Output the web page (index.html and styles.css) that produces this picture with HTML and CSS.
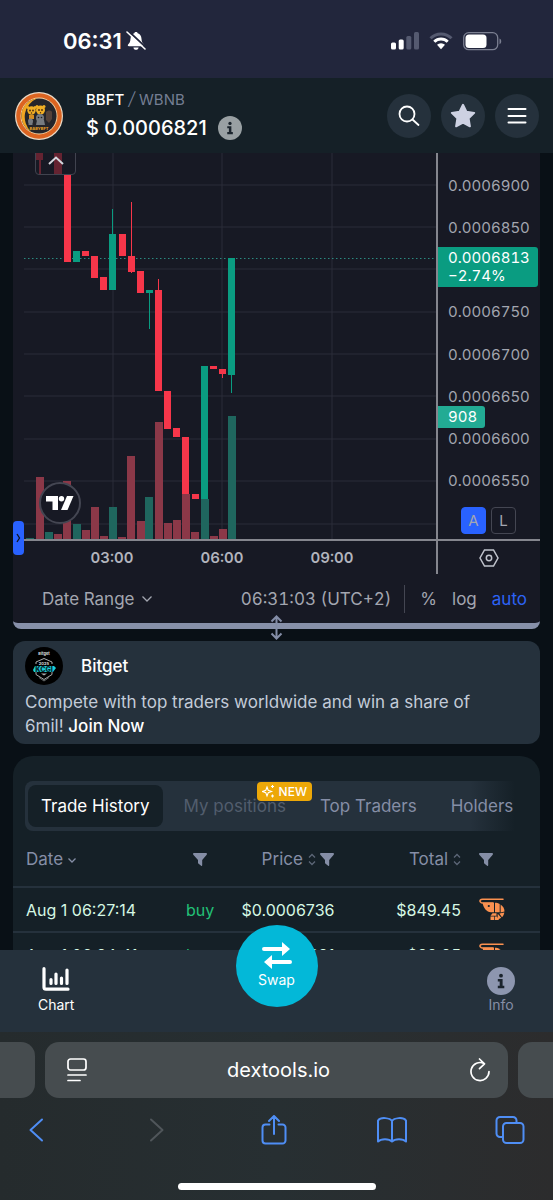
FILE: index.html
```html
<!DOCTYPE html>
<html lang="en">
<head>
  <meta charset="UTF-8">
  <meta name="viewport" content="width=device-width, initial-scale=1">
  <title>BBFT / WBNB</title>
  <link rel="stylesheet" href="styles.css">
</head>
<body>

<!-- shared shapes -->
<svg class="defs" aria-hidden="true">
  <symbol id="filter" viewBox="0 0 14 13"><path d="M1 0h12c1 0 1.300 1 .7 1.700L9.200 7v5.300c0 .6-.6.9-1.100.5L5.300 10.500 5 10V7L.3 1.700C-.3 1 0 0 1 0z"/></symbol>
  <symbol id="sort" viewBox="0 0 8 13"><path d="M1 4.500l3-3 3 3M1 8.500l3 3 3-3" fill="none" stroke="currentColor" stroke-width="1.300"/></symbol>
  <symbol id="info" viewBox="0 0 28 28">
    <circle cx="14" cy="14" r="14"/>
    <g fill="#1b242d"><circle cx="14" cy="8.700" r="1.900"/><path d="M10.800 12h4.800v6.800h1.700v2.400h-6.500v-2.400h1.900v-4.400h-1.900z"/></g>
  </symbol>
  <symbol id="shrimp" viewBox="0 0 26 24">
    <path d="M24 1.200H3.500C1.500 1.200.5 2.600 1.300 3.800 1.900 4.800 3 5 4.500 5H14" fill="none" stroke="#fb9150" stroke-width="1.500" stroke-linecap="round"/>
    <g fill="#fb9150">
      <path d="M3.500 4.700H15v9.500h-3C7.500 14 4.500 10 3.500 4.700z"/>
      <path d="M16 4.700c1.700 0 3.300.4 4.700 1.300v8.200H16z"/>
      <path d="M21.600 6.600c2.500 1.700 3.900 4.100 3.900 6.900l-3.900 1z"/>
      <path d="M20.300 15.600l5-1.100c-.2 1.800-1 3.400-2.300 4.700z"/>
      <path d="M18.700 15.800l3.500 4c-1 .8-2.200 1.200-3.500 1.400z"/>
      <path d="M13.500 15.200h4v2.500h-6zM11.500 18.500h3.800v3.500h-3.800zM16 18.500h2l2 3.500h-4z"/>
    </g>
    <circle cx="9.800" cy="8" r="1.100" fill="#152027"/>
  </symbol>
</svg>

<div class="status-bar">
  <div class="clock">
    <span>06:31</span>
    <svg width="20" height="20" viewBox="0 0 20 20">
      <path d="M10 1c.9 0 1.500.5 1.700 1.300 2.400.8 3.600 2.800 3.800 5.400.2 3 .9 4.200 2.200 5.500.9 1 .5 2-.7 2H3c-1.200 0-1.600-1-.7-2 1.300-1.300 2-2.500 2.200-5.500.2-2.600 1.400-4.600 3.800-5.400C8.500 1.500 9.100 1 10 1zM7.400 16.500h5.200c-.2 1.400-1.200 2.300-2.600 2.300s-2.400-.9-2.600-2.300z" fill="#fff"/>
      <path d="M2.500 0L20 16.500" stroke="#22263c" stroke-width="1.800"/>
      <path d="M1 1l18 17" stroke="#fff" stroke-width="1.600" stroke-linecap="round"/>
    </svg>
  </div>
  <div class="signals">
    <svg width="28" height="18" viewBox="0 0 28 18">
      <g fill="#fff"><rect y="10.500" width="5" height="7" rx="1.500"/><rect x="7.700" y="7.500" width="5" height="10" rx="1.500"/></g>
      <g fill="#555a70"><rect x="15.300" y="4" width="5" height="13.500" rx="1.500"/><rect x="23" width="5" height="17.500" rx="1.500"/></g>
    </svg>
    <svg width="24" height="18" viewBox="0 0 24 18" fill="none">
      <path d="M1.500 6.300a15 15 0 0 1 21 0" stroke="#555a70" stroke-width="3"/>
      <path d="M5.300 9.800a9.600 9.600 0 0 1 13.400 0" stroke="#fff" stroke-width="3"/>
      <path d="M8 12.800a5.800 5.800 0 0 1 8 0l-4 4.500z" fill="#fff"/>
    </svg>
    <svg width="39" height="19" viewBox="0 0 39 19">
      <rect x=".7" y=".7" width="34" height="17" rx="5" fill="none" stroke="#7b7f91" stroke-width="1.300"/>
      <rect x="2.500" y="2.500" width="21" height="13.500" rx="3.500" fill="#fff"/>
      <path d="M36.500 6.500c2.300.7 2.300 5 0 5.700z" fill="#7b7f91"/>
    </svg>
  </div>
</div>

<header class="token-bar">
  <svg class="token-logo" width="48" height="48" viewBox="0 0 48 48">
    <circle cx="24" cy="24" r="24" fill="#e9d9c6"/>
    <circle cx="24" cy="24" r="22.800" fill="#dc6421"/>
    <circle cx="24" cy="24" r="18.500" fill="#f2d3a4"/>
    <circle cx="24" cy="24" r="17.600" fill="#25252a"/>
    <path d="M22 6.500A17.500 17.500 0 0 0 16 39.500 20 20 0 0 1 22 6.500z" fill="#f0a522"/>
    <g fill="#f0ae24">
      <circle cx="16.500" cy="18.500" r="4.200"/><circle cx="25.500" cy="18" r="4.500"/>
      <circle cx="13" cy="15.500" r="1.500"/><circle cx="20" cy="15.500" r="1.500"/>
      <circle cx="22" cy="14.500" r="1.500"/><circle cx="29" cy="14.500" r="1.500"/>
    </g>
    <g fill="#4a2a12">
      <circle cx="15" cy="18.500" r=".9"/><circle cx="18" cy="18.500" r=".9"/>
      <circle cx="24" cy="18" r=".9"/><circle cx="27" cy="18" r=".9"/>
      <circle cx="16.500" cy="21" r=".7"/><circle cx="25.500" cy="20.700" r=".7"/>
    </g>
    <path d="M14 23h5v4h-5z" fill="#d48d22"/>
    <path d="M31 20c2-2 5-2 6 0v7l-3 4-3-3z" fill="#54423a"/>
    <g fill="#777b80"><circle cx="25" cy="26" r="4"/><path d="M22 28h7l1 5h-9z"/><circle cx="15.500" cy="29" r="2.500"/><path d="M13.500 30h4v3h-4z"/></g>
    <g fill="#202024"><circle cx="23.500" cy="25.500" r=".8"/><circle cx="26.500" cy="25.500" r=".8"/></g>
    <text class="logo-text" x="24" y="38">BABYBFT</text>
  </svg>
  <div class="token-info">
    <div class="pair"><b>BBFT</b> <i>/</i> WBNB</div>
    <div class="price">
      <span>$ 0.0006821</span>
      <svg width="24" height="24" fill="#99a0a3"><use href="#info"/></svg>
    </div>
  </div>
  <div class="token-actions">
    <button type="button" aria-label="Search">
      <svg width="22" height="22" viewBox="0 0 22 22" fill="none" stroke="#fff" stroke-width="1.800" stroke-linecap="round"><circle cx="9" cy="9" r="7.500"/><path d="M14.500 14.500l6 5.500"/></svg>
    </button>
    <button type="button" aria-label="Favourite">
      <svg width="26" height="26" viewBox="0 0 26 26"><path d="M13 1.800l3.400 7 7.800 1.100-5.600 5.500 1.300 7.900-6.900-3.700-6.900 3.700 1.300-7.900L1.800 9.900l7.800-1.100z" fill="#cdd1e2" stroke="#cdd1e2" stroke-width="2" stroke-linejoin="round"/></svg>
    </button>
    <button type="button" aria-label="Menu">
      <svg width="20" height="18" viewBox="0 0 20 18" stroke="#fff" stroke-width="2" stroke-linecap="round"><path d="M1.500 2h17M1.500 9h17M1.500 15.500h17"/></svg>
    </button>
  </div>
</header>

<main>
  <section class="chart">
    <div class="chart-body">
      <div class="plot">
        <svg class="candles" viewBox="0 0 412 386" preserveAspectRatio="none">
          <path d="M89 0v386M198 0v386M308 0v386M0 32h412M0 74h412M0 116h412M0 159h412M0 201h412M0 243h412M0 286h412M0 328h412M0 371h412" stroke="#2a2c38"/>
          <path d="M0 105.500h412" stroke="#2b8a80" stroke-dasharray="1.500 2.500"/>
          <!-- volume -->
          <g fill="#8b3848">
            <rect x="12" y="324" width="8" height="62"/>
            <rect x="30" y="381" width="8" height="5"/>
            <rect x="39" y="328" width="8" height="58"/>
            <rect x="58" y="377" width="8" height="9"/>
            <rect x="67" y="354" width="8" height="32"/>
            <rect x="76" y="383" width="8" height="3"/>
            <rect x="94" y="384" width="8" height="2"/>
            <rect x="103" y="303" width="8" height="83"/>
            <rect x="113" y="368" width="8" height="18"/>
            <rect x="131" y="269" width="8" height="117"/>
            <rect x="140" y="370" width="8" height="16"/>
            <rect x="149" y="367" width="8" height="19"/>
            <rect x="158" y="341" width="8" height="45"/>
            <rect x="167" y="379" width="8" height="7"/>
            <rect x="186" y="383" width="8" height="3"/>
            <rect x="195" y="376" width="8" height="10"/>
          </g>
          <g fill="#1f665e">
            <rect x="2" y="385" width="8" height="1"/>
            <rect x="21" y="379" width="8" height="7"/>
            <rect x="49" y="371" width="8" height="15"/>
            <rect x="85" y="354" width="8" height="32"/>
            <rect x="121" y="344" width="8" height="42"/>
            <rect x="177" y="346" width="8" height="40"/>
            <rect x="204" y="263" width="8" height="123"/>
          </g>
          <!-- candles -->
          <g fill="#f7364a">
            <g opacity=".35"><rect x="11" y="0" width="8" height="7"/><rect x="15" y="7" width="2" height="14"/><rect x="30" y="0" width="8" height="21"/></g>
            <rect x="40" y="22" width="7" height="87"/>
            <rect x="58" y="98" width="7" height="5"/>
            <rect x="67" y="103" width="7" height="22"/>
            <rect x="76" y="124" width="7" height="13"/>
            <rect x="95" y="81" width="7" height="22"/>
            <rect x="104" y="103" width="7" height="16"/><rect x="107" y="49" width="1" height="71"/>
            <rect x="113" y="118" width="7" height="22"/>
            <rect x="131" y="137" width="7" height="101"/><rect x="134" y="126" width="1" height="12"/>
            <rect x="140" y="238" width="7" height="38"/>
            <rect x="149" y="275" width="7" height="9"/>
            <rect x="158" y="284" width="7" height="57"/>
            <rect x="168" y="341" width="7" height="5"/>
            <rect x="186" y="213" width="7" height="3"/>
            <rect x="195" y="216" width="7" height="5"/><rect x="198" y="220" width="1" height="5"/>
          </g>
          <g fill="#0a9c81">
            <rect x="49" y="98" width="7" height="11"/>
            <rect x="85" y="81" width="7" height="56"/><rect x="88" y="56" width="1" height="26"/>
            <rect x="122" y="137" width="7" height="3"/><rect x="125" y="139" width="1" height="37"/>
            <rect x="177" y="213" width="7" height="133"/>
            <rect x="204" y="105" width="7" height="117"/><rect x="207" y="221" width="1" height="19"/>
          </g>
        </svg>
        <button class="legend-toggle" type="button" aria-label="Toggle legend">
          <svg width="16" height="9" viewBox="0 0 16 9" fill="none" stroke="#d5d7de" stroke-width="2"><path d="M1 8l7-6.500L15 8"/></svg>
        </button>
        <a class="tv-logo" href="#" aria-label="TradingView">
          <svg width="28" height="16" viewBox="0 0 28 16" fill="#fff"><path d="M0 1h12v14H6.500V6.500H0z"/><circle cx="15.500" cy="3.700" r="2.700"/><path d="M21 1h6.500l-6 14H15z"/></svg>
        </a>
      </div>

      <div class="price-axis">
        <ul>
          <li>0.0006900</li>
          <li>0.0006850</li>
          <li></li>
          <li>0.0006750</li>
          <li>0.0006700</li>
          <li>0.0006650</li>
          <li>0.0006600</li>
          <li>0.0006550</li>
        </ul>
        <div class="scale-buttons">
          <button class="on" type="button">A</button>
          <button type="button">L</button>
        </div>
        <div class="tag last-price">0.0006813<br>−2.74%</div>
        <div class="tag volume">908</div>
      </div>

      <button class="side-handle" type="button" aria-label="Show drawing tools">
        <svg width="5" height="10" viewBox="0 0 5 10" fill="none" stroke="#10131f" stroke-width="1.300"><path d="M1 1l2.500 4L1 9"/></svg>
      </button>
    </div>

    <div class="time-axis">
      <div class="times"><span>03:00</span><span>06:00</span><span>09:00</span></div>
      <button class="axis-settings" type="button" aria-label="Axis settings">
        <svg width="20" height="18" viewBox="0 0 20 18" fill="none" stroke="#c0c3cc" stroke-width="1.500"><path d="M5.500 1h9L19 9l-4.500 8h-9L1 9z"/><circle cx="10" cy="9" r="2.700"/></svg>
      </button>
    </div>

    <div class="chart-footer">
      <button class="range" type="button">Date Range
        <svg width="10" height="6" viewBox="0 0 10 6" fill="none" stroke="#a3a6b0" stroke-width="1.300"><path d="M.5.500L5 5 9.500.5"/></svg>
      </button>
      <button class="zone" type="button">06:31:03 (UTC+2)</button>
      <button type="button">%</button>
      <button type="button">log</button>
      <button class="auto" type="button">auto</button>
    </div>
    <svg class="resize" width="13" height="25" viewBox="0 0 13 25" fill="none" stroke="#848da7" stroke-width="2"><path d="M6.500 1.500v22M1.500 6.500l5-5 5 5M1.500 18.500l5 5 5-5"/></svg>
  </section>

  <section class="promo">
    <div class="promo-head">
      <svg width="38" height="38" viewBox="0 0 38 38">
        <circle cx="19" cy="19" r="19" fill="#000"/>
        <text class="promo-logo-text" x="19" y="8">Bitget</text>
        <g fill="none" stroke="#a9acad" stroke-width="1"><path d="M11 17v-2l8-3.500 8 3.500v2M11 25v2.500l8 5 8-5V25"/><path d="M14 30.500l5 3.500 5-3.500" stroke="#676b6c"/></g>
        <text class="promo-logo-text" x="19" y="18">2025</text>
        <path d="M10 19h19l2 2-3 4H9l-1-2z" fill="#19cfd9"/>
        <text class="kcgi" x="19" y="24.500">KCGI</text>
        <path d="M16 26.500h6l-3 2z" fill="#a9acad"/>
      </svg>
      <h2>Bitget</h2>
    </div>
    <p>Compete with top traders worldwide and win a share of 6mil! <a href="#">Join Now</a></p>
  </section>

  <section class="trades">
    <nav class="tabs">
      <button class="active" type="button">Trade History</button>
      <button class="muted" type="button">My positions
        <span class="badge">
          <svg width="13" height="13" viewBox="0 0 13 13" fill="none" stroke="#fff" stroke-width="1.100"><path d="M5 2l1.200 3.300L9.500 6.500 6.200 7.700 5 11 3.800 7.700.5 6.500l3.300-1.200z"/><path d="M10.500 0v3M9 1.500h3M10.500 9.500v3M9 11h3"/></svg>
          NEW
        </span>
      </button>
      <button type="button">Top Traders</button>
      <button type="button">Holders</button>
    </nav>
    <table>
      <thead>
        <tr>
          <th class="date">Date <svg width="8" height="5" viewBox="0 0 8 5" fill="none" stroke="#858ea6" stroke-width="1.300"><path d="M.5.500L4 4 7.500.5"/></svg></th>
          <th class="type"><svg width="14" height="13"><use href="#filter"/></svg></th>
          <th class="amount">Price <svg class="sort" width="8" height="13"><use href="#sort"/></svg> <svg width="14" height="13"><use href="#filter"/></svg></th>
          <th class="total">Total <svg class="sort" width="8" height="13"><use href="#sort"/></svg></th>
          <th class="maker"><svg width="14" height="13"><use href="#filter"/></svg></th>
        </tr>
      </thead>
      <tbody>
        <tr>
          <td class="date">Aug 1 06:27:14</td>
          <td class="type">buy</td>
          <td class="amount">$0.0006736</td>
          <td class="total">$849.45</td>
          <td class="maker"><svg width="26" height="24"><use href="#shrimp"/></svg></td>
        </tr>
        <tr>
          <td class="date">Aug 1 06:24:41</td>
          <td class="type">buy</td>
          <td class="amount">$0.0006621</td>
          <td class="total">$29.95</td>
          <td class="maker"><svg width="26" height="24"><use href="#shrimp"/></svg></td>
        </tr>
      </tbody>
    </table>
  </section>
</main>

<nav class="bottom-nav">
  <a class="current" href="#">
    <svg width="28" height="24" viewBox="0 0 28 24" fill="none" stroke="#fff" stroke-width="3.200" stroke-linecap="round" stroke-linejoin="round"><path d="M2 1.700v18.500c0 1.200.8 2 2 2h22M9 12.500v4M14 7v9.500M19.500 11v5.500M25 3v13.500"/></svg>
    Chart
  </a>
  <button class="swap" type="button">
    <svg width="30" height="27" viewBox="0 0 30 27" fill="#fff"><path d="M2 5h18V0l8 7-8 7V9H2a2 2 0 0 1 0-4z"/><path d="M28 18H10v-5l-8 7 8 7v-5h18a2 2 0 0 0 0-4z"/></svg>
    Swap
  </button>
  <a href="#">
    <svg width="28" height="28" fill="#8d96af"><use href="#info"/></svg>
    Info
  </a>
</nav>

<footer class="browser">
  <div class="address-row">
    <div class="ghost left"></div>
    <div class="address">
      <button type="button" aria-label="Page menu">
        <svg width="20" height="24" viewBox="0 0 20 24" fill="none" stroke="#fff" stroke-width="1.700" stroke-linecap="round"><rect x="1" y="1" width="18" height="11" rx="2.500"/><path d="M1 17h18M1 22.500h12"/></svg>
      </button>
      <input type="text" value="dextools.io" aria-label="Address">
      <button type="button" aria-label="Reload">
        <svg width="20" height="24" viewBox="0 0 20 24" fill="none" stroke="#fff" stroke-width="1.700" stroke-linecap="round" stroke-linejoin="round"><path d="M14 5.500A9 9 0 1 0 19 13.500M9.500 1l5 4.800-5 4.800"/></svg>
      </button>
    </div>
    <div class="ghost right"></div>
  </div>
  <div class="toolbar">
    <button type="button" aria-label="Back"><svg width="30" height="30" viewBox="0 0 30 30"><path d="M20 4.500L8.500 15 20 25.500"/></svg></button>
    <button class="off" type="button" aria-label="Forward"><svg width="30" height="30" viewBox="0 0 30 30"><path d="M11 4.500L22.500 15 11 25.500"/></svg></button>
    <button type="button" aria-label="Share"><svg width="30" height="30" viewBox="0 0 30 30"><path d="M10.500 9.500H6.500a3 3 0 0 0-3 3v13a3 3 0 0 0 3 3h17a3 3 0 0 0 3-3v-13a3 3 0 0 0-3-3h-4M15 19V1M10 6l5-5 5 5"/></svg></button>
    <button type="button" aria-label="Bookmarks"><svg width="30" height="30" viewBox="0 0 30 30"><path d="M15 6c-2-3-11-4.500-14-.5v21c3-3 11-3 14 0 3-3 11-3 14 0v-21C26 1.500 17 3 15 6zM15 6v20"/></svg></button>
    <button type="button" aria-label="Tabs"><svg width="30" height="30" viewBox="0 0 30 30"><path d="M7.500 22H5a3.500 3.500 0 0 1-3.500-3.500v-13A3.500 3.500 0 0 1 5 2h13a3.500 3.500 0 0 1 3.500 3.500V8"/><rect x="8" y="8" width="20.500" height="20" rx="3.500"/></svg></button>
  </div>
  <div class="home-bar"></div>
</footer>

</body>
</html>
```
FILE: styles.css
```css
* {
  box-sizing: border-box;
}

body {
  margin: 0;
  height: 100vh;
  display: flex;
  flex-direction: column;
  background: #091016;
  color: #fff;
  font-family: Inter, sans-serif;
  font-size: 16px;
}

svg {
  display: block;
  flex-shrink: 0;
}

button {
  margin: 0;
  padding: 0;
  border: none;
  background: none;
  color: inherit;
  font: inherit;
  cursor: pointer;
}

a {
  color: inherit;
  text-decoration: none;
}

.defs {
  position: absolute;
  width: 0;
  height: 0;
}

/* status bar */
.status-bar {
  display: flex;
  justify-content: space-between;
  align-items: center;
  height: 78px;
  padding: 4px 51px 0 63px;
  background: #22263c;
  flex-shrink: 0;
}

.clock {
  display: flex;
  align-items: center;
  gap: 4px;
  font-size: 22px;
  font-weight: 600;
}

.signals {
  display: flex;
  align-items: center;
  gap: 10px;
}

/* token header */
.token-bar {
  display: flex;
  align-items: center;
  height: 75px;
  padding: 0 14px 0 15px;
  background: #152027;
  flex-shrink: 0;
}

.logo-text {
  fill: #f0a522;
  font-size: 4px;
  font-weight: 700;
  text-anchor: middle;
}

.token-info {
  flex: 1;
  padding-left: 23px;
}

.pair {
  color: #747e93;
  font-size: 15px;
  line-height: 24px;
}

.pair b {
  color: #fff;
  font-weight: 500;
}

.pair i {
  font-size: 18px;
  font-weight: 300;
}

.price {
  display: flex;
  align-items: center;
  gap: 11px;
  font-size: 20px;
  font-weight: 500;
  line-height: 32px;
}

.token-actions {
  display: flex;
  gap: 10px;
}

.token-actions button {
  display: flex;
  align-items: center;
  justify-content: center;
  width: 44px;
  height: 44px;
  border-radius: 50%;
  background: #25313c;
}

/* page */
main {
  flex: 1;
  min-height: 0;
  overflow: hidden;
  padding: 0 13px;
}

.chart {
  position: relative;
  background: #171924;
  border-bottom: 6px solid #8790a9;
  border-radius: 0 0 8px 8px;
  font-variant-numeric: tabular-nums;
}

.chart-body {
  position: relative;
  display: flex;
  height: 388px;
  margin-left: 11px;
  border-bottom: 2px solid #85868e;
}

.plot {
  position: relative;
  flex: 1;
}

.candles {
  width: 100%;
  height: 386px;
}

.legend-toggle {
  position: absolute;
  top: -8px;
  left: 11px;
  width: 41px;
  height: 30px;
  padding: 0 12px;
  border: 1px solid #41434f;
  border-radius: 4px;
}

.tv-logo {
  position: absolute;
  left: 15px;
  bottom: 15px;
  display: flex;
  align-items: center;
  justify-content: center;
  width: 42px;
  height: 42px;
  border: 2px solid #444652;
  border-radius: 50%;
  background: #171924;
}

.price-axis {
  position: relative;
  width: 104px;
  padding-top: 11px;
  border-left: 2px solid #85868e;
  color: #a3a6b0;
  font-size: 15px;
}

.price-axis ul {
  display: grid;
  grid-template-rows: repeat(8, 1fr);
  align-items: center;
  height: 338px;
  margin: 0;
  padding: 0 0 0 10px;
  list-style: none;
}

.scale-buttons {
  display: flex;
  gap: 5px;
  padding: 5px 0 0 23px;
}

.scale-buttons button {
  width: 25px;
  height: 27px;
  border: 1px solid #444652;
  border-radius: 4px;
}

.scale-buttons .on {
  border-color: #2962ff;
  background: #2962ff;
}

.tag {
  position: absolute;
  left: 0;
  padding: 2px 8px 2px 10px;
  border-radius: 0 3px 3px 0;
  color: #fff;
  line-height: 18px;
}

.last-price {
  top: 94px;
  background: #0a9c81;
}

.volume {
  top: 253px;
  background: #22ab94;
}

.side-handle {
  position: absolute;
  left: -11px;
  bottom: -16px;
  display: flex;
  align-items: center;
  justify-content: center;
  width: 11px;
  height: 34px;
  border-radius: 4px;
  background: #2962ff;
}

.time-axis {
  display: flex;
  height: 33px;
}

.times {
  flex: 1;
  display: grid;
  grid-template-columns: repeat(3, 110px);
  align-items: center;
  padding-left: 44px;
  color: #b2b4bd;
  font-size: 15px;
  font-weight: 600;
  text-align: center;
}

.axis-settings {
  display: flex;
  align-items: center;
  justify-content: center;
  width: 104px;
  border-left: 2px solid #85868e;
}

.chart-footer {
  display: flex;
  align-items: center;
  gap: 15px;
  height: 49px;
  padding: 0 13px 0 29px;
  color: #a3a6b0;
  font-size: 17px;
}

.range {
  display: flex;
  align-items: center;
  gap: 8px;
  margin-right: auto;
}

.zone {
  padding: 4px 13px 4px 0;
  border-right: 1px solid #444652;
}

.auto {
  color: #2d63f5;
}

.resize {
  position: absolute;
  left: 50%;
  bottom: -17px;
  margin-left: -7px;
}

/* promo card */
.promo {
  margin-top: 12px;
  padding: 6px 12px;
  border-radius: 12px;
  background: #25313c;
}

.promo-head {
  display: flex;
  align-items: center;
  gap: 18px;
}

.promo-logo-text,
.kcgi {
  fill: #d9dcdd;
  font-size: 4px;
  font-weight: 700;
  text-anchor: middle;
}

.kcgi {
  fill: #06333a;
  font-size: 7px;
  font-weight: 900;
}

.promo h2 {
  margin: 0;
  font-size: 17px;
  font-weight: 500;
}

.promo p {
  margin: 5px 0 0;
  padding-right: 30px;
  color: #c3cbd8;
  font-size: 17px;
  line-height: 24px;
}

.promo a {
  color: #fff;
  font-weight: 500;
}

/* trade list */
.trades {
  margin-top: 12px;
  padding-top: 25px;
  border-radius: 20px 20px 0 0;
  background: #152027;
}

.tabs {
  display: flex;
  gap: 8px;
  height: 50px;
  margin: 0 20px 0 12px;
  padding: 4px 3px;
  border-radius: 8px;
  background: linear-gradient(to right, #25313c 90%, #152027 99%);
}

.tabs button {
  position: relative;
  flex-shrink: 0;
  padding: 0 13px;
  border-radius: 8px;
  color: #858ea6;
  font-size: 17px;
}

.tabs .active {
  background: #152027;
  color: #fff;
}

.tabs .muted {
  color: #525d6d;
}

.tabs .badge {
  position: absolute;
  top: -3px;
  right: -13px;
  display: flex;
  align-items: center;
  gap: 4px;
  padding: 0 5px;
  border-radius: 4px;
  background: #eda808;
  color: #fff;
  font-size: 12px;
  font-weight: 500;
  line-height: 19px;
}

table {
  width: 100%;
  border-collapse: collapse;
  table-layout: fixed;
}

tr {
  border-bottom: 2px solid #25313c;
}

th,
td {
  height: 45px;
  padding: 0;
  color: #d5f8e4;
  font-weight: 400;
  text-align: right;
  white-space: nowrap;
}

th {
  height: 56px;
  color: #858ea6;
  fill: #858ea6;
  font-size: 17px;
}

th svg {
  display: inline-block;
  vertical-align: -1px;
}

th .sort {
  color: #5c6677;
}

.date {
  width: 31%;
  padding-left: 13px;
  text-align: left;
}

.date svg {
  vertical-align: 2px;
}

.type {
  width: 9%;
  text-align: center;
}

td.type {
  color: #22c077;
}

.amount {
  width: 21%;
}

.total {
  width: 24%;
}

.maker {
  padding-left: 18px;
  text-align: left;
}

/* bottom navigation */
.bottom-nav {
  position: relative;
  display: flex;
  justify-content: space-between;
  flex-shrink: 0;
  height: 82px;
  padding: 17px 38px 0;
  background: #25313c;
  font-size: 14px;
}

.bottom-nav a {
  display: flex;
  flex-direction: column;
  align-items: center;
  justify-content: space-between;
  height: 46px;
  color: #858ea6;
}

.bottom-nav .current {
  color: #fff;
}

.swap {
  position: absolute;
  left: 50%;
  top: -25px;
  display: flex;
  flex-direction: column;
  align-items: center;
  gap: 2px;
  width: 82px;
  height: 82px;
  margin-left: -41px;
  padding-top: 17px;
  border-radius: 50%;
  background: #03b8d8;
  color: #fff;
}

/* browser chrome */
.browser {
  flex-shrink: 0;
  padding: 10px 0;
  background: linear-gradient(to right, #252b2d, #272f32 50%, #2c2c2d);
}

.address-row {
  display: flex;
  gap: 10px;
  height: 56px;
}

.ghost,
.address {
  background: #464c4f;
}

.ghost {
  width: 35px;
}

.left {
  border-radius: 0 14px 14px 0;
}

.right {
  border-radius: 14px 0 0 14px;
}

.address {
  flex: 1;
  display: flex;
  align-items: center;
  padding: 0 18px 0 22px;
  border-radius: 14px;
}

.address input {
  flex: 1;
  min-width: 0;
  border: none;
  outline: none;
  background: none;
  color: #fff;
  font: inherit;
  font-size: 20px;
  text-align: center;
}

.toolbar {
  display: flex;
  justify-content: space-between;
  align-items: center;
  height: 64px;
  padding: 0 28px 0 22px;
}

.toolbar svg {
  fill: none;
  stroke: #4f8ef5;
  stroke-width: 2;
  stroke-linecap: round;
  stroke-linejoin: round;
}

.toolbar .off svg {
  stroke: #50565a;
}

.home-bar {
  width: 198px;
  height: 7px;
  margin: 21px auto 0;
  border-radius: 4px;
  background: #fff;
}
```
